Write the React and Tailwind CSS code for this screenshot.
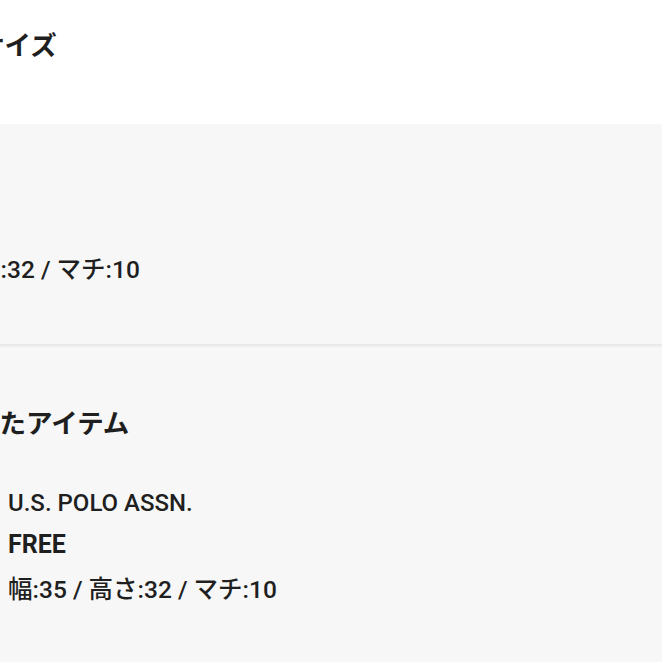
export default function App() {
  return (
    <div className="w-[662px] h-[662px] overflow-hidden bg-[#f7f7f7] text-[#1f1f1f] font-['Roboto','Noto_Sans_CJK_JP',sans-serif]">
      {/* size heading */}
      <div className="h-[124px] bg-white pt-[30px]">
        <h2 className="ml-[-22px] text-[26.5px] leading-[31px] font-bold whitespace-nowrap">サイズ</h2>
      </div>

      {/* size detail */}
      <div className="h-[220px] pt-[130px]">
        <p className="ml-[-129px] text-[24.5px] leading-[32px] font-medium whitespace-nowrap">
          幅:35 / 高さ:32 / マチ:10
        </p>
      </div>
      <div className="h-[2px] bg-[#e9e9e9] shadow-[0_1px_2px_rgba(0,0,0,0.04)]" />

      {/* recently viewed */}
      <div className="pt-[62px]">
        <h2 className="ml-[-27px] text-[26.5px] leading-[31px] font-bold whitespace-nowrap">したアイテム</h2>
        <div className="mt-[44px] pl-[8px] flex flex-col">
          <p className="text-[24px] leading-[41px] font-medium whitespace-nowrap">U.S. POLO ASSN.</p>
          <p className="text-[25px] leading-[42px] font-bold whitespace-nowrap">FREE</p>
          <p className="text-[24.5px] leading-[48px] font-medium whitespace-nowrap">幅:35 / 高さ:32 / マチ:10</p>
        </div>
      </div>
    </div>
  );
}
